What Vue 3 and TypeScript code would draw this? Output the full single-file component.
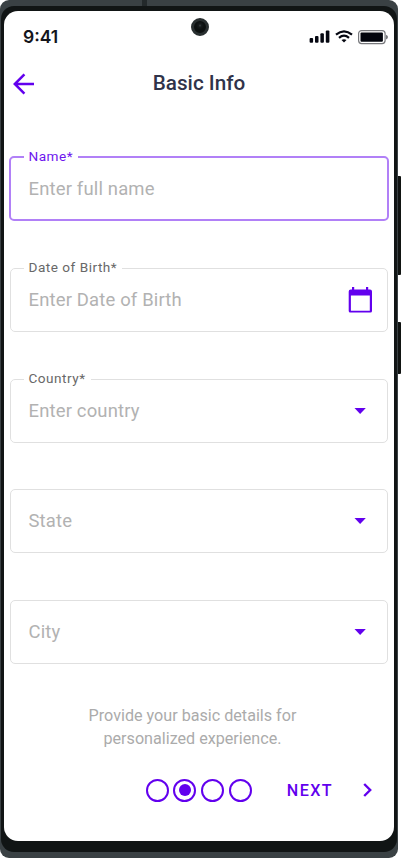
<script setup lang="ts">
interface Field {
  label: string
  placeholder: string
  icon: 'none' | 'calendar' | 'caret'
  active?: boolean
}

const fields: Field[] = [
  { label: 'Name*', placeholder: 'Enter full name', icon: 'none', active: true },
  { label: 'Date of Birth*', placeholder: 'Enter Date of Birth', icon: 'calendar' },
  { label: 'Country*', placeholder: 'Enter country', icon: 'caret' },
  { label: '', placeholder: 'State', icon: 'caret' },
  { label: '', placeholder: 'City', icon: 'caret' },
]

const steps = [1, 2, 3, 4]
const currentStep = 2
</script>

<template>
  <div class="stage">
    <div class="device">
      <div class="antenna"></div>
      <div class="bezel">
        <main class="screen">
          <header class="status">
            <span class="time">9:41</span>
            <svg class="signals" width="80" height="16" viewBox="0 0 80 16">
              <g fill="#050711">
                <rect x="0.6" y="9.1" width="3.5" height="4.7" rx="1" />
                <rect x="6" y="6.9" width="3.5" height="6.9" rx="1" />
                <rect x="11.4" y="4.3" width="3.5" height="9.5" rx="1" />
                <rect x="16.8" y="1.6" width="3.6" height="12.2" rx="1" />
              </g>
              <g fill="none" stroke="#050711" stroke-width="2.2">
                <path d="M27 5.6 Q35 -1 43 5.6" />
                <path d="M30 8.8 Q35 4.5 40 8.8" />
              </g>
              <path d="M32.5 11.1 Q35 9.2 37.5 11.1 L35 13.6Z" fill="#050711" />
              <rect x="49.6" y="1.6" width="26.5" height="13" rx="3" fill="none" stroke="#77787c" stroke-width="1.2" />
              <rect x="51.5" y="3.5" width="22.4" height="9.200" rx="1" fill="#02040c" />
              <path d="M77 5.8 Q79 6.5 79 8.1 Q79 9.7 77 10.4Z" fill="#77787c" />
            </svg>
          </header>

          <nav class="topbar">
            <svg class="back" width="22" height="22" viewBox="0 0 22 22">
              <path d="M21 11H2.5M11.4 1.4 1.8 11l9.6 9.6" fill="none" stroke="#6200ee" stroke-width="2.5" />
            </svg>
            <h1>Basic Info</h1>
          </nav>

          <form class="fields">
            <fieldset
              v-for="field in fields"
              :key="field.placeholder"
              :class="{ labelled: field.label, active: field.active }"
            >
              <legend v-if="field.label">{{ field.label }}</legend>
              <div class="row">
                <span class="placeholder">{{ field.placeholder }}</span>
                <svg v-if="field.icon === 'calendar'" width="24" height="26" viewBox="0 0 24 26">
                  <path
                    fill="#6200ee"
                    fill-rule="evenodd"
                    d="M4 0h2.2v2.5h11.800V0h2.200v2.500H22a2 2 0 0 1 2 2V24a1.600 1.600 0 0 1-1.600 1.600H2.300A1.600 1.600 0 0 1 .700 24V4.500a2 2 0 0 1 2-2H4ZM2.900 8.500v15.200h18.900V8.500Z"
                  />
                </svg>
                <svg v-else-if="field.icon === 'caret'" class="caret" width="12" height="6" viewBox="0 0 12 6">
                  <path d="M.5 0h11.3L6.15 6Z" fill="#6200ee" />
                </svg>
              </div>
            </fieldset>
          </form>

          <p class="hint">Provide your basic details for<br />personalized experience.</p>

          <footer class="footer">
            <div class="steps">
              <i v-for="step in steps" :key="step" :class="{ current: step === currentStep }"></i>
            </div>
            <span class="next">NEXT</span>
            <svg width="9" height="14" viewBox="0 0 9 14">
              <path d="M1.2 1 7.2 7l-6 6" fill="none" stroke="#6200ee" stroke-width="2.4" />
            </svg>
          </footer>
        </main>
      </div>
      <div class="camera"></div>
    </div>
    <div class="buttons">
      <b class="volume"></b>
      <b class="power"></b>
    </div>
  </div>
</template>

<style>
body {
  background: #fff;
}
</style>

<style scoped>
.stage {
  display: flex;
  width: 401px;
  height: 858px;
  overflow: hidden;
  font-family: Roboto, sans-serif;
}
.device {
  position: relative;
  box-sizing: border-box;
  width: 398px;
  height: 858px;
  padding: 6px 1px;
  border-radius: 9px;
  background: #3a4144;
}
.antenna {
  position: absolute;
  top: 0;
  left: 142px;
  width: 5px;
  height: 6px;
  background: #23292b;
}
.bezel {
  box-sizing: border-box;
  height: 846px;
  padding: 5px 3px 11px;
  border-radius: 13px;
  background: #111515;
}
.screen {
  box-sizing: border-box;
  display: flex;
  flex-direction: column;
  height: 830px;
  border-radius: 14px;
  background: #fff;
}
.camera {
  position: absolute;
  box-sizing: border-box;
  top: 18px;
  left: 191px;
  width: 18px;
  height: 18px;
  border: 3px solid #292f30;
  border-radius: 50%;
  background: radial-gradient(circle at 50% 38%, #3e4344 0, #161b1c 1.5px, #0c1010 4px);
}
.buttons {
  display: flex;
  flex-direction: column;
  gap: 47px;
  width: 3px;
  padding-top: 176px;
}
.buttons b {
  border-radius: 0 1px 1px 0;
  background: #111412;
}
.volume {
  height: 99px;
}
.power {
  height: 52px;
}
.status {
  display: flex;
  align-items: center;
  justify-content: space-between;
  height: 52px;
  padding: 0 5px 0 19px;
}
.time {
  color: #14151b;
  font: 600 17.5px/20px Inter, sans-serif;
}
.topbar {
  display: grid;
  grid-template-columns: 22px 1fr 22px;
  align-items: center;
  height: 42px;
  padding: 0 9px;
}
h1 {
  margin: 0;
  padding-bottom: 2px;
  color: #30334a;
  font-size: 20.7px;
  font-weight: 500;
  line-height: 24px;
  text-align: center;
}
.fields {
  display: grid;
  grid-auto-rows: 64px;
  gap: 46.75px;
  margin-top: 52px;
  padding: 0 6px;
}
fieldset {
  display: flex;
  box-sizing: border-box;
  min-width: 0;
  height: 64px;
  margin: 0;
  padding: 0 15px 0 12.5px;
  border: 1.3px solid #e0e0e0;
  border-radius: 5px;
}
/* The border runs through the middle of the legend, so the box starts higher. */
.labelled {
  height: 70.5px;
  margin-top: -6.5px;
  padding-bottom: 6px;
}
legend {
  height: 14px;
  padding: 0 5px;
  color: #686868;
  font-size: 13.6px;
  line-height: 12px;
  letter-spacing: 0.5px;
}
.row {
  display: flex;
  flex: 1;
  align-items: center;
  justify-content: space-between;
}
.placeholder {
  padding-left: 5px;
  color: #b2b2b2;
  font-size: 18.46px;
  line-height: 24px;
  letter-spacing: 0.17px;
}
.caret {
  margin-right: 6px;
}
.active {
  height: 71px;
  margin: -7px -1px 0;
  padding-bottom: 5px;
  border: 2px solid #b180f7;
}
.active legend {
  color: #6e16ee;
}
.hint {
  margin: 40.3px 0 0;
  padding-right: 13px;
  color: #ababab;
  font-size: 16.15px;
  line-height: 23px;
  text-align: center;
}
.footer {
  display: flex;
  align-items: center;
  height: 24px;
  margin-top: 28px;
  padding-left: 141.5px;
}
.steps {
  display: flex;
  gap: 4.5px;
}
.steps i {
  display: grid;
  box-sizing: border-box;
  width: 23.2px;
  height: 23.2px;
  place-items: center;
  border: 2.2px solid #6200ee;
  border-radius: 50%;
}
.current::after {
  width: 12px;
  height: 12px;
  border-radius: 50%;
  background: #6200ee;
  content: '';
}
.next {
  width: 76px;
  margin-left: 35px;
  color: #6200ee;
  font-size: 16.15px;
  font-weight: 500;
  letter-spacing: 1.44px;
}
</style>
